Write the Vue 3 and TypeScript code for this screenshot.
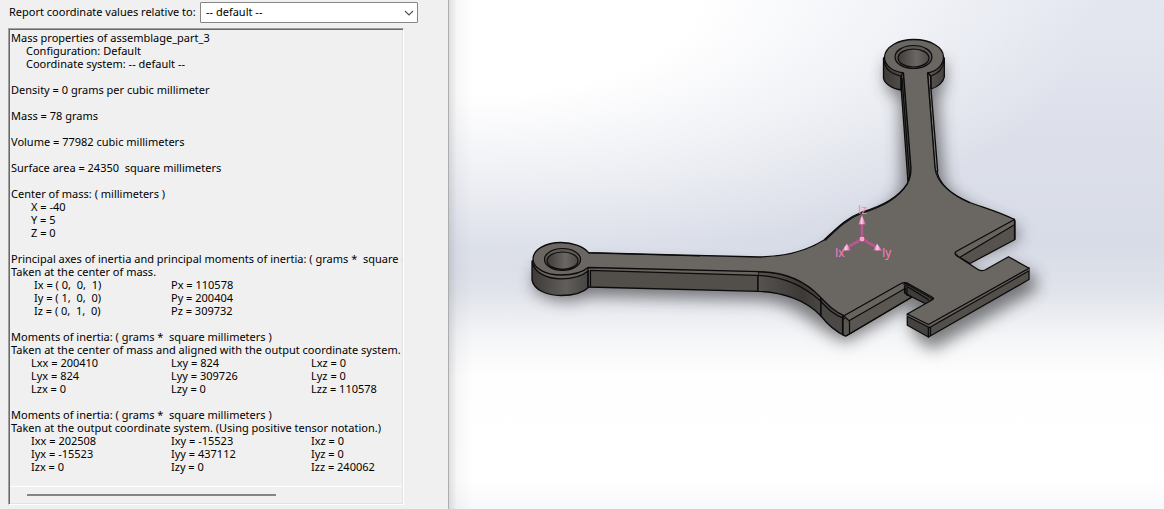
<script setup lang="ts">
import { ref } from 'vue'

interface Section {
  title: string
  subtitle?: string
  kind?: 'indent' | 'values' | 'axes' | 'tensor'
  rows?: string[][]
}

const coordinateSystem = ref('default')

const sections: Section[] = [
  {
    title: 'Mass properties of assemblage_part_3',
    kind: 'indent',
    rows: [['Configuration: Default'], ['Coordinate system: -- default --']],
  },
  { title: 'Density = 0 grams per cubic millimeter' },
  { title: 'Mass = 78 grams' },
  { title: 'Volume = 77982 cubic millimeters' },
  { title: 'Surface area = 24350  square millimeters' },
  {
    title: 'Center of mass: ( millimeters )',
    kind: 'values',
    rows: [['X = -40'], ['Y = 5'], ['Z = 0']],
  },
  {
    title: 'Principal axes of inertia and principal moments of inertia: ( grams *  square millimeters )',
    subtitle: 'Taken at the center of mass.',
    kind: 'axes',
    rows: [
      ['Ix = ( 0,  0,  1)', 'Px = 110578'],
      ['Iy = ( 1,  0,  0)', 'Py = 200404'],
      ['Iz = ( 0,  1,  0)', 'Pz = 309732'],
    ],
  },
  {
    title: 'Moments of inertia: ( grams *  square millimeters )',
    subtitle: 'Taken at the center of mass and aligned with the output coordinate system.',
    kind: 'tensor',
    rows: [
      ['Lxx = 200410', 'Lxy = 824', 'Lxz = 0'],
      ['Lyx = 824', 'Lyy = 309726', 'Lyz = 0'],
      ['Lzx = 0', 'Lzy = 0', 'Lzz = 110578'],
    ],
  },
  {
    title: 'Moments of inertia: ( grams *  square millimeters )',
    subtitle: 'Taken at the output coordinate system. (Using positive tensor notation.)',
    kind: 'tensor',
    rows: [
      ['Ixx = 202508', 'Ixy = -15523', 'Ixz = 0'],
      ['Iyx = -15523', 'Iyy = 437112', 'Iyz = 0'],
      ['Izx = 0', 'Izy = 0', 'Izz = 240062'],
    ],
  },
]
</script>

<template>
  <main class="app">
    <aside class="panel">
      <div class="field">
        <label for="coord">Report coordinate values relative to:</label>
        <div class="select-wrap">
          <select id="coord" v-model="coordinateSystem">
            <option value="default">-- default --</option>
          </select>
          <svg class="chevron" viewBox="0 0 10 6" aria-hidden="true">
            <path d="M1 1 L5 5 L9 1" fill="none" stroke="#505050" stroke-width="1.1" />
          </svg>
        </div>
      </div>

      <div class="report">
        <div class="report-body">
          <section v-for="(s, i) in sections" :key="i" class="section">
            <p>{{ s.title }}</p>
            <p v-if="s.subtitle">{{ s.subtitle }}</p>
            <table v-if="s.rows" :class="s.kind">
              <tbody>
                <tr v-for="(row, r) in s.rows" :key="r">
                  <td v-for="cell in row" :key="cell">{{ cell }}</td>
                </tr>
              </tbody>
            </table>
          </section>
        </div>
        <div class="scroll-track"><div class="scroll-thumb"></div></div>
      </div>
    </aside>

    <section class="viewport" aria-label="Model view">
      <svg class="model" viewBox="449 0 715 509" preserveAspectRatio="xMinYMin meet">
        <defs>
          <filter id="soft" x="-20%" y="-20%" width="140%" height="140%">
            <feGaussianBlur stdDeviation="8" />
          </filter>
          <linearGradient id="hole" x1="0" x2="1" y1="0" y2="0">
            <stop offset="0" stop-color="#3f3c39" />
            <stop offset="0.6" stop-color="#6b6764" />
            <stop offset="1" stop-color="#4d4a47" />
          </linearGradient>
          <linearGradient id="barrel" x1="0" x2="1" y1="0" y2="0">
            <stop offset="0" stop-color="#3d3a38" />
            <stop offset="0.6" stop-color="#625e5b" />
            <stop offset="1" stop-color="#454240" />
          </linearGradient>
          <linearGradient id="bend" x1="0" x2="1" y1="0" y2="0">
            <stop offset="0" stop-color="#57534f" />
            <stop offset="0.7" stop-color="#3c3937" />
            <stop offset="1" stop-color="#4a4744" />
          </linearGradient>
          <linearGradient id="pink" x1="0" x2="1" y1="0" y2="0">
            <stop offset="0" stop-color="#b0558a" />
            <stop offset="0.45" stop-color="#ffd0e8" />
            <stop offset="1" stop-color="#b0558a" />
          </linearGradient>
        </defs>

        <g class="shadow" filter="url(#soft)">
          <path d="M886 62 V84 Q890 96 900 98 L902 186 Q896 206 862 224 C835 238 830 266 760 268 L590 264 L534 270 V290 Q560 308 590 296 L758 300 C800 302 812 328 846 342 L912 304 L912 334 L932 350 L1036 290 V276 L1012 264 L985 278 L960 264 L1018 240 V228 Q955 206 944 182 L938 98 Q946 92 945 62 Z" />
        </g>

        <!-- sides -->
        <g class="edge">
          <path fill="url(#barrel)" d="M883.5 58 V78 C884 83 892 89 901 90 L904 72 H927 L931 89 C938 87 943.5 82 944.3 77 V58 Z" />
          <path fill="url(#barrel)" d="M532 261 V280 C534 290 547 295.500 561 295.500 C574 295.500 584 292 589 287 V261 Z" />
          <path fill="#524e4a" d="M588 267 V287 L758 291.300 V271.500 Z" />
          <path fill="url(#bend)" d="M758 271.500 V291.300 C782 292 806 300 821 316 V296 C803 278 783 272 758 271.500 Z" />
          <path fill="#4b4845" d="M821 296 V316 C828 325 835 331 845 336 V316 Z" />
          <path fill="#5a5652" d="M843 316 V335 L846 336 L849.500 334 L912 297 L908 282 Z" />
          <path fill="#3f3c3a" d="M905 283 V293 L912 297 L926 304 L933 299 Z" />
          <path fill="#56524e" d="M955 251 V254.500 L970 263.500 L1015 239.500 V221 L1014 219 Z" />
          <path fill="#45423f" d="M907.300 314 V325.300 L928.500 337 V325 Z" />
          <path fill="#534f4b" d="M928.500 325 V337 L1029 279.500 V268 Z" />
          <path fill="#4a4744" d="M901 76 L901.300 90 L908 182 L911.500 170 L903.500 72 Z" />
          <path fill="#7a7672" d="M927.500 72 L930.500 76 L931 89 L937.700 171 L935 172 Z" />
        </g>

        <!-- chamfer bands -->
        <g fill="#67635f">
          <path d="M844 315.700 L849 320.700 L906 288 L902 283 Z" />
          <path d="M956 251.500 L960 257.500 L1014 225 V220 Z" />
          <path d="M588 267.500 V270.300 L758 275.300 V271.700 Z" />
          <path d="M907.300 314 V316.500 L929.500 327.500 L1029 270.800 V268.300 Z" />
          <path d="M533 261 C535 273 547 278.800 561 278.800 C573 278.800 583 275.500 588 270.500 V266 Z" />
        </g>

        <!-- top face -->
        <path
          class="edge" fill="#6a6662"
          d="M903.500 73 C890 71 884.500 64 884.500 57 C885 47 898 39.500 914 39.500 C930 39.500 943.500 47 943.500 57
             C943.500 64 938 71 927.500 73 L935 168 C937 186 955 196 970 202.500 C985 208 1000 212 1014.500 219.500
             L957 251 Q953 253 957 256 L978 269.500 Q981 271.500 985 270 L1008.500 256.700 L1029 268.300
             L928.500 324.500 L907.300 314 L932 300 Q935 298.500 932 297 L909 284 Q905 281.500 901 283.500 L844 315.700
             C835 312 829 306 820 296.700 C804 280 783 272 760 271.700 L588 267.500
             C583 272 573 275 561 275 C545 275 533 268 533 259 C533 250 545 242.500 561 242.500 C573 242.500 584 247 588.500 252.700
             L760 257 C786 256.500 808 250 824 240 C836 229 846 218 862 212 C882 206 898 198 907 184 Q911 178 911 168 Z"
        />

        <!-- chamfer lines -->
        <g class="line">
          <path d="M884 61 C885 69 892 74 901 76 L901 90" />
          <path d="M944 61 C943 69 937 74 931 76 V89" />
          <path d="M902 78 L909.500 176" />
          <path d="M532.500 263 C535 273 547 278.800 561 278.800 C573 278.800 583 275.500 588.500 270.500" />
          <path d="M588 268 V287 M590.500 270 V287 M590 270.300 L758 275.300 C782 276.500 804 286 820 300.500 C828 309 834 315 845 319" />
          <path d="M588.500 252.800 L700 256" />
          <path d="M842.500 316 V334 M849.500 321 V334 M844 316 L849 320.700 L906 288 M846 336 L912 297" />
          <path d="M907 285 L907 296 M904.500 286 V293 L912 297.500 M908 287 L929 300" />
          <path d="M959.500 257.500 L1014 225 M1014.500 219.500 V239" />
          <path d="M907.500 316.500 L929.500 327.500 L1029 270.800 M930.500 327 V336" />
          <path d="M908 183 C898 199 882 207 862 213 C847 219 838 228 825 240.500" />
          <path d="M937 171 C940 187 955 196.500 970 203" />
        </g>

        <!-- bores -->
        <g class="line">
          <ellipse cx="913.500" cy="57" rx="18.500" ry="11.500" fill="#5c5854" />
          <ellipse cx="913.500" cy="58" rx="15.500" ry="9" fill="url(#hole)" />
          <ellipse cx="562.500" cy="259.500" rx="18" ry="11" fill="#5c5854" />
          <ellipse cx="562.500" cy="260.700" rx="15.500" ry="8.700" fill="url(#hole)" />
        </g>

        <!-- inertia triad -->
        <g>
          <path d="M862 239 V222 M862 239 L848 247 M862 239 L876 247" stroke="#b8588c" stroke-width="2.600" />
          <path d="M862 215 L866 224.500 H858 Z" fill="url(#pink)" stroke="#a04c7c" stroke-width="0.400" />
          <path d="M841.500 250.800 L847 243.500 L851 250.500 Z" fill="url(#pink)" stroke="#a04c7c" stroke-width="0.400" />
          <path d="M882.500 250.800 L877 243.500 L873 250.500 Z" fill="url(#pink)" stroke="#a04c7c" stroke-width="0.400" />
          <circle cx="862" cy="239" r="3" fill="#f3a5cd" stroke="#a8487e" stroke-width="1" />
          <text class="axis" x="858" y="214">Iz</text>
          <text class="axis" x="835" y="257">Ix</text>
          <text class="axis" x="882" y="257">Iy</text>
        </g>
      </svg>
    </section>
  </main>
</template>

<style>
body {
  margin: 0;
}
</style>

<style scoped>
.app {
  display: flex;
  min-height: 100vh;
  font-family: "Noto Sans", "Open Sans", sans-serif;
  font-size: 11px;
  line-height: 13px;
  color: #000;
}
.panel {
  flex: 0 0 449px;
  min-width: 0;
  box-sizing: border-box;
  padding: 2px 30px 5px 8px;
  background: #f0f0f0;
  border-right: 1px solid #adadad;
}
.field {
  display: flex;
  align-items: center;
  gap: 4px;
  padding-left: 1px;
}
.field label {
  flex: 0 0 auto;
  padding-bottom: 2px;
  white-space: nowrap;
}
.select-wrap {
  position: relative;
  width: 218px;
  margin-left: auto;
}
select {
  display: block;
  width: 100%;
  height: 21px;
  padding: 0 20px 2px 5px;
  border: 1px solid #858585;
  border-radius: 1px;
  background: #fff;
  font: inherit;
  color: inherit;
  appearance: none;
}
.chevron {
  position: absolute;
  right: 4px;
  top: 8px;
  width: 10px;
  height: 6px;
  pointer-events: none;
}
.report {
  margin: 5px 14px 0 0;
  border: 1px solid;
  border-color: #a0a0a0 #fff #fff #a0a0a0;
  box-shadow: inset 1px 1px #696969, inset -1px -1px #e3e3e3;
}
.report-body {
  box-sizing: border-box;
  min-height: 457px;
  padding: 2px 0 0 2px;
  margin-right: 1px;
  overflow: hidden;
  white-space: pre;
}
.section + .section {
  margin-top: 13px;
}
.section p {
  margin: 0;
}
table {
  border-collapse: collapse;
  margin-left: 20px;
}
.indent {
  margin-left: 15px;
}
td {
  min-width: 140px;
  padding: 0;
}
.axes td:first-child {
  min-width: 137px;
  padding-left: 3px;
}
.scroll-track {
  margin: 0 1px 1px;
  padding: 7px 126px 7px 17px;
  border-top: 1px solid #fff;
}
.scroll-thumb {
  height: 2px;
  background: #858585;
}
.viewport {
  flex: 1;
  min-width: 0;
  background:
    linear-gradient(90deg, rgba(60, 60, 70, 0.16), rgba(60, 60, 70, 0.04) 8px, transparent 24px),
    radial-gradient(ellipse 620px 270px at 30px 0, #fff 35%, rgba(255, 255, 255, 0.5) 68%, transparent),
    linear-gradient(180deg, #e4e7f0 0, #dcdfe9 30%, #d8dce7 48%, #e0e3ea 57%, #f4f5f7 66%, #fefefe 74%, #fff 94%, #f7f8fa 100%);
}
.model {
  display: block;
  width: 100%;
}
.shadow {
  fill: #3c3c40;
  opacity: 0.65;
}
.edge,
.edge path {
  stroke: #0c0b0b;
  stroke-width: 1.3;
  stroke-linejoin: round;
}
.line {
  fill: none;
  stroke: #0c0b0b;
  stroke-width: 1.2;
}
.axis {
  fill: #ff80c4;
  font-family: "Open Sans", sans-serif;
  font-size: 12px;
}
</style>
